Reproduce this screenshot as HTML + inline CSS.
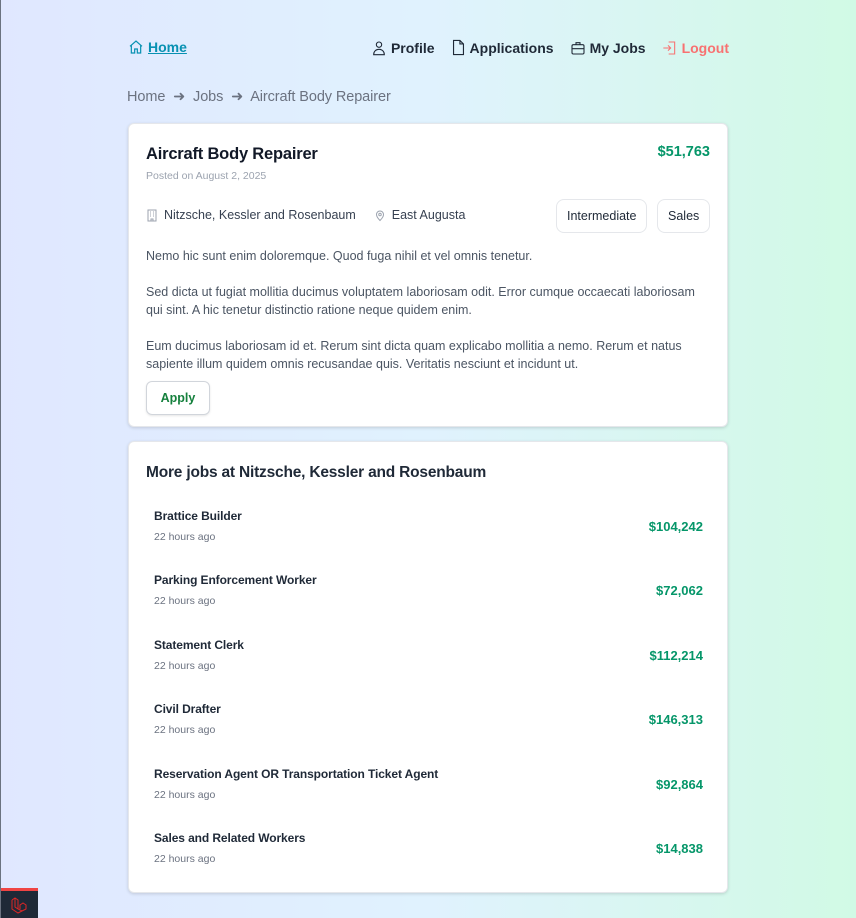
<!DOCTYPE html>
<html><head><meta charset="utf-8"><style>
*{box-sizing:border-box;margin:0;padding:0}
body{width:856px;height:918px;overflow:hidden;font-family:"Liberation Sans",sans-serif;background:linear-gradient(to right,#e0e7ff 0%,#e0f2fe 50%,#d1fae5 100%);position:relative;box-shadow:inset 1px 0 0 #6b7280}
.nav{position:absolute;top:39px;left:128px;width:601px;height:20px;font-size:14px;font-weight:bold;color:#1f2937}
.nav a{display:flex;align-items:center;gap:4px;text-decoration:none;color:#1f2937}
.nav .r{position:absolute;right:0;top:0;display:flex;gap:16px}
svg{display:block}
.crumb{position:absolute;top:89px;left:127px;font-size:14.5px;color:#6b7280;letter-spacing:-.1px}
.card{position:absolute;left:128px;width:600px;background:#fff;border-radius:6px;box-shadow:0 1px 3px rgba(0,0,0,.15);border:1px solid #e5e7eb}
.g{color:#059669;font-weight:bold}
.tag{position:absolute;top:75px;height:34px;border:1px solid #e5e7eb;border-radius:8px;font-size:12.5px;color:#1f2937;line-height:32px;padding:0 10px}
p.d{font-size:12.5px;color:#4b5563;line-height:18px}
.item{position:absolute;left:25px;right:24px;height:40px}
.item .t{font-size:12px;font-weight:bold;color:#1f2937;position:absolute;top:0;left:0;letter-spacing:-.1px}
.item .s{font-size:10.5px;color:#6b7280;position:absolute;top:22px;left:0}
.item .p{position:absolute;right:0;top:10px;font-size:13px}
</style></head><body>
<div class="nav">
<a style="position:absolute;left:0;top:0;color:#0891b2"><svg width="16" height="16" viewBox="0 0 24 24" fill="none" stroke="#0891b2" stroke-width="1.8"><path d="M3 11l9-8 9 8M5 9.5V21h5v-6h4v6h5V9.5"/></svg><span style="text-decoration:underline">Home</span></a>
<div class="r">
<a><svg width="16" height="16" viewBox="0 0 24 24" fill="none" stroke="#1f2937" stroke-width="1.6"><circle cx="12" cy="7" r="4"/><path d="M4 22c0-5 3.5-8 8-8s8 3 8 8z"/></svg>Profile</a>
<a><svg width="15" height="17" viewBox="0 0 20 24" fill="none" stroke="#1f2937" stroke-width="1.6"><path d="M3 2h9l5 5v15H3zM12 2v5h5"/></svg>Applications</a>
<a><svg width="16" height="16" viewBox="0 0 24 24" fill="none" stroke="#1f2937" stroke-width="1.6"><rect x="3" y="7" width="18" height="14" rx="2"/><path d="M9 7V4h6v3M3 13h18"/></svg>My Jobs</a>
<a style="color:#f87171"><svg width="16" height="16" viewBox="0 0 24 24" fill="none" stroke="#f87171" stroke-width="1.6"><path d="M10 3h9v18h-9M2 12h11M9 8l4 4-4 4"/></svg><span style="color:#f87171">Logout</span></a>
</div>
</div>
<div class="crumb">Home &nbsp;➜&nbsp; Jobs &nbsp;➜&nbsp; Aircraft Body Repairer</div>
<div class="card" style="top:123px;height:304px">
<div style="position:absolute;left:17px;top:21px;font-size:16.5px;font-weight:bold;color:#111827;letter-spacing:-.2px">Aircraft Body Repairer</div>
<div style="position:absolute;left:17px;top:46px;font-size:10.5px;color:#9ca3af">Posted on August 2, 2025</div>
<div class="g" style="position:absolute;right:17px;top:20px;font-size:14.5px">$51,763</div>
<div style="position:absolute;left:17px;top:84px;font-size:12.5px;color:#374151;display:flex;align-items:center;gap:6px"><svg width="12" height="13" viewBox="0 0 12 13" fill="none" stroke="#9ca3af"><rect x="2" y="1" width="8" height="11"/><path d="M4 3h1M7 3h1M4 5h1M7 5h1M4 7h1M7 7h1M5 12v-2h2v2"/></svg>Nitzsche, Kessler and Rosenbaum<span style="width:6px"></span><svg width="12" height="13" viewBox="0 0 24 24" fill="none" stroke="#9ca3af" stroke-width="2"><path d="M12 22s-7-7-7-12a7 7 0 0114 0c0 5-7 12-7 12z"/><circle cx="12" cy="10" r="2.5"/></svg>East Augusta</div>
<div class="tag" style="left:427px">Intermediate</div>
<div class="tag" style="left:528px">Sales</div>
<div style="position:absolute;left:17px;top:123px;right:17px">
<p class="d">Nemo hic sunt enim doloremque. Quod fuga nihil et vel omnis tenetur.</p><br>
<p class="d">Sed dicta ut fugiat mollitia ducimus voluptatem laboriosam odit. Error cumque occaecati laboriosam qui sint. A hic tenetur distinctio ratione neque quidem enim.</p><br>
<p class="d">Eum ducimus laboriosam id et. Rerum sint dicta quam explicabo mollitia a nemo. Rerum et natus sapiente illum quidem omnis recusandae quis. Veritatis nesciunt et incidunt ut.</p>
</div>
<div style="position:absolute;left:17px;top:257px;width:64px;height:34px;border:1px solid #d1d5db;border-radius:6px;box-shadow:0 1px 2px rgba(0,0,0,.1);font-size:12.5px;font-weight:bold;color:#15803d;text-align:center;line-height:32px">Apply</div>
</div>
<div class="card" style="top:441px;height:452px">
<div style="position:absolute;left:17px;top:22px;font-size:15.5px;font-weight:bold;color:#1f2937;letter-spacing:-.2px">More jobs at Nitzsche, Kessler and Rosenbaum</div>
<div class="item" style="top:67px"><div class="t">Brattice Builder</div><div class="s">22 hours ago</div><div class="p g">$104,242</div></div>
<div class="item" style="top:131px"><div class="t">Parking Enforcement Worker</div><div class="s">22 hours ago</div><div class="p g">$72,062</div></div>
<div class="item" style="top:196px"><div class="t">Statement Clerk</div><div class="s">22 hours ago</div><div class="p g">$112,214</div></div>
<div class="item" style="top:260px"><div class="t">Civil Drafter</div><div class="s">22 hours ago</div><div class="p g">$146,313</div></div>
<div class="item" style="top:325px"><div class="t">Reservation Agent OR Transportation Ticket Agent</div><div class="s">22 hours ago</div><div class="p g">$92,864</div></div>
<div class="item" style="top:389px"><div class="t">Sales and Related Workers</div><div class="s">22 hours ago</div><div class="p g">$14,838</div></div>
</div>
<div style="position:absolute;left:1px;top:888px;width:37px;height:30px;background:#1f2937;border-top:3px solid #ef4444">
<svg style="margin:6px 0 0 10px" width="18" height="18" viewBox="0 0 18 18" fill="none" stroke="#dc2626" stroke-width="1"><path d="M1 3l3-2 3 2v9l4 2 4-2V8l-3-2-3 2v4M1 3v9l6 4 8-4M4 1v9l3 2"/></svg>
</div>
</body></html>
